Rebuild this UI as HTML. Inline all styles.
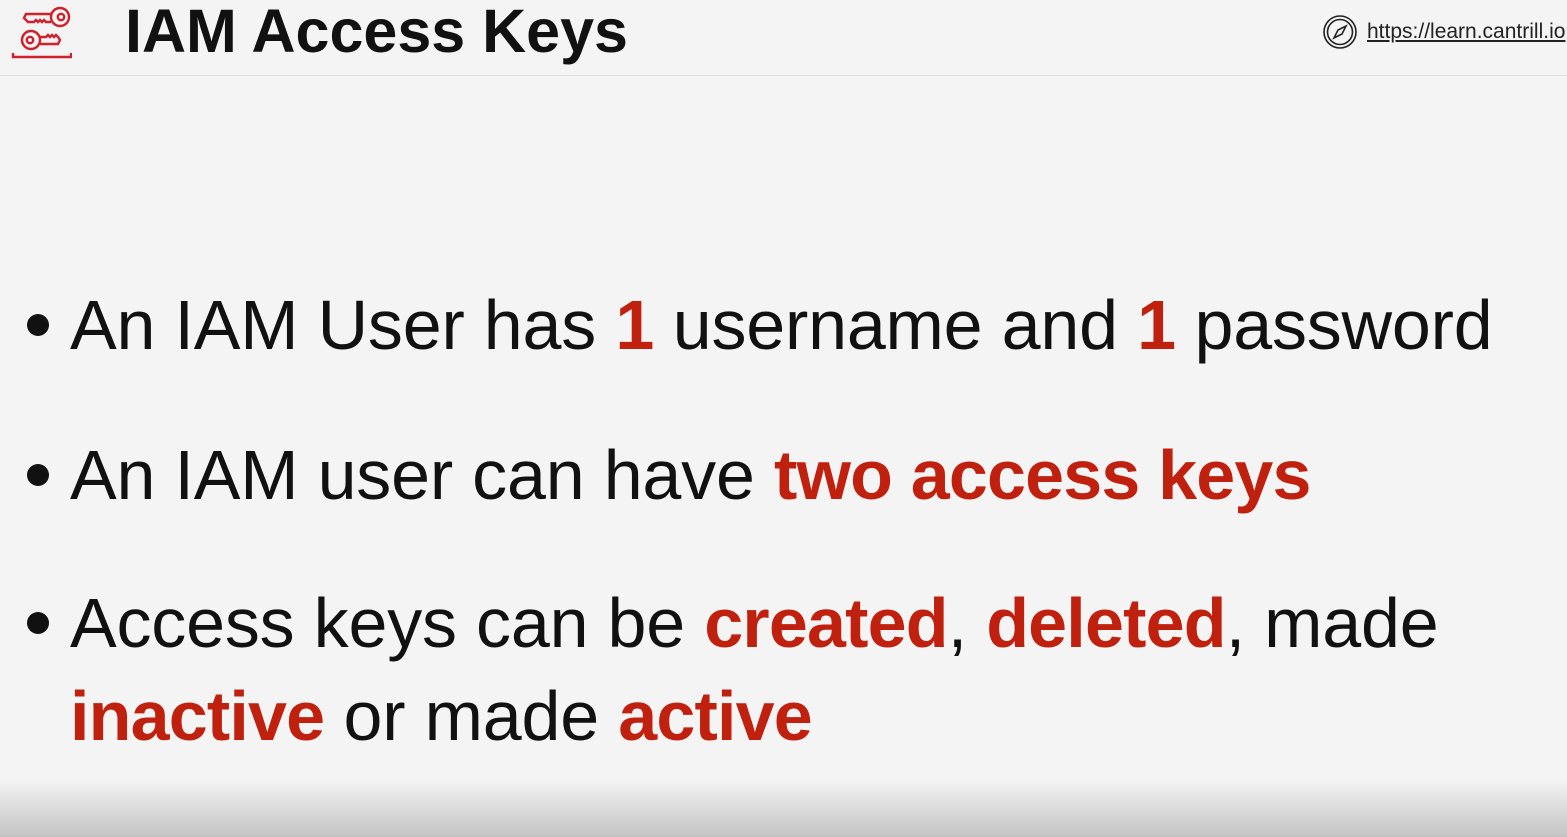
<!DOCTYPE html>
<html><head><style>
body{margin:0;width:1567px;height:837px;overflow:hidden;background:#f4f4f4;font-family:"Liberation Sans",sans-serif;position:relative}
.hdr{position:absolute;left:0;top:0;width:1567px;height:75px;border-bottom:1px solid #dcdcdc}
.title{position:absolute;left:125px;top:-4px;font-size:61px;font-weight:bold;color:#111}
.url{position:absolute;left:1367px;top:20px;font-size:21px;color:#222;text-decoration:underline}
.line{position:absolute;left:70px;font-size:70px;color:#111;white-space:nowrap;letter-spacing:-0.2px}
.b{color:#c0200e;font-weight:bold;letter-spacing:-0.8px}
.dot{position:absolute;left:27px;width:22px;height:22px;border-radius:50%;background:#111}
.bot{position:absolute;left:0;top:780px;width:1567px;height:57px;background:linear-gradient(#f4f4f4,#c3c3c3)}
</style></head><body>
<div class="hdr">
<svg style="position:absolute;left:10px;top:3px" width="62" height="56" viewBox="0 0 62 56" fill="none" stroke="#d0202a" stroke-width="2.4">
<circle cx="50" cy="14" r="9"/><circle cx="51" cy="14" r="3.2"/>
<path d="M41 11 H16 l-2 4 4 4 h6 l2-2 2 2 2-2 2 2 2-2 2 2 h5"/>
<circle cx="21" cy="37" r="9"/><circle cx="20" cy="37" r="3.2"/>
<path d="M30 34 h6 l2-2 2 2 2-2 2 2 2-2 2 2 l2 3 -2 4 H30"/>
<path d="M3 50 v4 h58 v-4"/>
</svg>
<div class="title">IAM Access Keys</div>
<svg style="position:absolute;left:1322px;top:14px" width="36" height="36" viewBox="0 0 36 36" fill="none" stroke="#222" stroke-width="1.6">
<circle cx="18" cy="18" r="16"/><circle cx="18" cy="18" r="12.5"/>
<path d="M24 12 L20 20 L12 24 L16 16 Z"/>
</svg>
<div class="url">https://learn.cantrill.io</div>
</div>
<div class="dot" style="top:314px"></div>
<div class="line" style="top:285px">An IAM User has <span class="b">1</span> username and <span class="b">1</span> password</div>
<div class="dot" style="top:464px"></div>
<div class="line" style="top:435px">An IAM user can have <span class="b">two access keys</span></div>
<div class="dot" style="top:612px"></div>
<div class="line" style="top:583px">Access keys can be <span class="b">created</span>, <span class="b">deleted</span>, made</div>
<div class="line" style="top:676px"><span class="b">inactive</span> or made <span class="b">active</span></div>
<div class="bot"></div>
</body></html>
